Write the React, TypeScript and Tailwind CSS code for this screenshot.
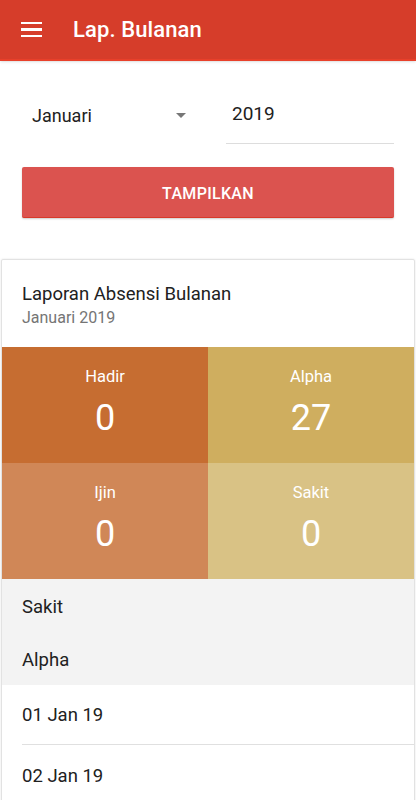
import React from 'react'

const stats = [
  { label: 'Hadir', value: '0', bg: 'bg-[#c66d31]' },
  { label: 'Alpha', value: '27', bg: 'bg-[#cfae5f]' },
  { label: 'Ijin', value: '0', bg: 'bg-[#d08757]' },
  { label: 'Sakit', value: '0', bg: 'bg-[#d9c285]' },
]

export default function App() {
  return (
    <div className="w-[416px] h-[800px] overflow-hidden bg-white font-['Roboto',sans-serif]">
      <header className="h-[61px] bg-[#d63d2a] border-b-2 border-[#e8402a] flex items-center shadow-sm">
        <div className="ml-[21px] w-[21px] flex flex-col gap-[4px]">
          <span className="block h-[2.5px] bg-white" />
          <span className="block h-[2.5px] bg-white" />
          <span className="block h-[2.5px] bg-white" />
        </div>
        <h1 className="ml-[31px] text-white text-[22px] font-medium tracking-[0.1px]">Lap. Bulanan</h1>
      </header>

      <div className="px-[22px] pt-[25px]">
        <div className="flex gap-[36px] h-[58px]">
          <div className="w-[168px] flex items-center justify-between pl-[10px] pr-[1px]">
            <span className="text-[18px] text-[#212121]">Januari</span>
            <span className="w-0 h-0 border-l-[5px] border-r-[5px] border-t-[5px] border-l-transparent border-r-transparent border-t-[#777] mr-[3px]" />
          </div>
          <div className="flex-1 border-b border-[#ddd] flex items-center pl-[6px]">
            <span className="text-[19px] text-[#212121]">2019</span>
          </div>
        </div>

        <button className="mt-[23px] w-full h-[51px] pt-[3px] rounded-[2px] bg-[#db534f] border-b border-[#d8392a] shadow-[0_1px_2px_rgba(0,0,0,0.2)] text-white text-[16px] font-medium tracking-[0.3px]">
          TAMPILKAN
        </button>
      </div>

      <div className="mt-[41px] mx-[1px] border border-[#e2e2e2] rounded-t-[2px] shadow-[0_0_2px_rgba(0,0,0,0.12)]">
        <div className="h-[87px] px-[20px] pt-[22px]">
          <div className="text-[18.5px] text-[#212121] leading-[24px]">Laporan Absensi Bulanan</div>
          <div className="text-[16px] text-[#757575] leading-[22px] mt-[1px]">Januari 2019</div>
        </div>
        <div className="grid grid-cols-2">
          {stats.map((s) => (
            <div key={s.label} className={`${s.bg} h-[116px] flex flex-col items-center pt-[19px] text-white`}>
              <span className="text-[16.5px] leading-[22px]">{s.label}</span>
              <span className="text-[36px] leading-[42px] mt-[9px]">{s.value}</span>
            </div>
          ))}
        </div>
        <div className="bg-[#f3f3f3] h-[106px] px-[20px] flex flex-col">
          <div className="h-[54px] pt-[3px] flex items-center text-[18.5px] text-[#212121]">Sakit</div>
          <div className="h-[52px] pt-[3px] flex items-center text-[18.5px] text-[#212121]">Alpha</div>
        </div>
        <div className="pl-[20px]">
          <div className="h-[60px] pt-[3px] flex items-center text-[18.5px] text-[#212121] border-b border-[#e0e0e0]">01 Jan 19</div>
          <div className="h-[60px] pt-[3px] flex items-center text-[18.5px] text-[#212121]">02 Jan 19</div>
        </div>
      </div>
    </div>
  )
}
